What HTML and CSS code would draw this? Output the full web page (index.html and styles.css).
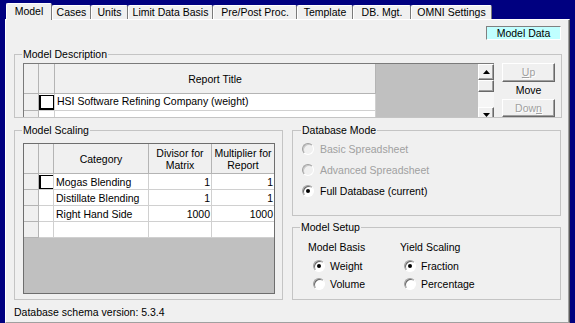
FILE: index.html
```html
<!DOCTYPE html>
<html lang="en">
<head>
    <meta charset="UTF-8">
    <title>Model</title>
    <link rel="stylesheet" href="styles.css">
</head>
<body>
    <div class="window">
        <div class="tabs">
            <div class="tab tab-model active">Model</div>
            <div class="tab tab-cases">Cases</div>
            <div class="tab tab-units">Units</div>
            <div class="tab tab-limit">Limit Data Basis</div>
            <div class="tab tab-prepost">Pre/Post Proc.</div>
            <div class="tab tab-template">Template</div>
            <div class="tab tab-db">DB. Mgt.</div>
            <div class="tab tab-omni">OMNI Settings</div>
        </div>

        <div class="panel">
            <div class="panel-top">
                <div class="model-data">Model Data</div>
            </div>

            <fieldset class="group desc">
                <legend>Model Description</legend>
                <div class="desc-body">
                    <div class="desc-grid">
                        <div class="cells desc-cells">
                            <div class="cell hdr"></div>
                            <div class="cell hdr"></div>
                            <div class="cell hdr title">Report Title</div>
                            <div class="cell rowhdr"></div>
                            <div class="cell"><span class="current"></span></div>
                            <div class="cell text">HSI Software Refining Company (weight)</div>
                            <div class="cell rowhdr"></div>
                            <div class="cell"></div>
                            <div class="cell"></div>
                        </div>
                        <div class="fill"></div>
                        <div class="scrollbar">
                            <div class="sb-btn">
                                <svg width="7" height="4" viewBox="0 0 7 4"><path d="M0 4 L3.5 0 L7 4 Z" fill="#000"/></svg>
                            </div>
                            <div class="sb-thumb"></div>
                            <div class="sb-track"></div>
                            <div class="sb-btn">
                                <svg width="7" height="4" viewBox="0 0 7 4"><path d="M0 0 L7 0 L3.5 4 Z" fill="#000"/></svg>
                            </div>
                        </div>
                    </div>
                    <div class="move">
                        <button disabled><u>U</u>p</button>
                        <span class="move-label">Move</span>
                        <button disabled>Dow<u>n</u></button>
                    </div>
                </div>
            </fieldset>

            <div class="columns">
                <fieldset class="group scaling">
                    <legend>Model Scaling</legend>
                    <div class="scale-grid">
                        <div class="cells scale-cells">
                            <div class="cell hdr"></div>
                            <div class="cell hdr"></div>
                            <div class="cell hdr title">Category</div>
                            <div class="cell hdr title">Divisor for<br>Matrix</div>
                            <div class="cell hdr title last">Multiplier for<br>Report</div>

                            <div class="cell rowhdr"></div>
                            <div class="cell"><span class="current"></span></div>
                            <div class="cell text">Mogas Blending</div>
                            <div class="cell num">1</div>
                            <div class="cell num last">1</div>

                            <div class="cell rowhdr"></div>
                            <div class="cell"></div>
                            <div class="cell text">Distillate Blending</div>
                            <div class="cell num">1</div>
                            <div class="cell num last">1</div>

                            <div class="cell rowhdr"></div>
                            <div class="cell"></div>
                            <div class="cell text">Right Hand Side</div>
                            <div class="cell num">1000</div>
                            <div class="cell num last">1000</div>

                            <div class="cell rowhdr"></div>
                            <div class="cell"></div>
                            <div class="cell"></div>
                            <div class="cell"></div>
                            <div class="cell last"></div>
                        </div>
                    </div>
                </fieldset>

                <div class="right-col">
                    <fieldset class="group mode">
                        <legend>Database Mode</legend>
                        <div class="option disabled"><span class="radio"></span>Basic Spreadsheet</div>
                        <div class="option disabled"><span class="radio"></span>Advanced Spreadsheet</div>
                        <div class="option"><span class="radio on"></span>Full Database (current)</div>
                    </fieldset>

                    <fieldset class="group setup">
                        <legend>Model Setup</legend>
                        <div class="setup-cols">
                            <div class="setup-col basis">
                                <div class="setup-label">Model Basis</div>
                                <div class="option"><span class="radio on"></span>Weight</div>
                                <div class="option"><span class="radio"></span>Volume</div>
                            </div>
                            <div class="setup-col yield">
                                <div class="setup-label">Yield Scaling</div>
                                <div class="option"><span class="radio on"></span>Fraction</div>
                                <div class="option"><span class="radio"></span>Percentage</div>
                            </div>
                        </div>
                    </fieldset>
                </div>
            </div>

            <div class="status">Database schema version: 5.3.4</div>
        </div>
    </div>
</body>
</html>
```

FILE: styles.css
```css
* {
    box-sizing: border-box;
}

body {
    margin: 0;
    height: 323px;
    overflow: hidden;
    background: #000080;
    color: #000;
    font-family: 'Liberation Sans', Arial, sans-serif;
    font-size: 10.5px;
}

.window {
    display: flex;
    flex-direction: column;
    height: 323px;
    padding: 3px 5px 0 5px;
}

/* Tabs */
.tabs {
    display: flex;
    align-items: flex-end;
    height: 16px;
    padding-left: 1px;
}

.tab {
    height: 14px;
    line-height: 13px;
    text-align: center;
    background: #f0f0f0;
    border-top: 1px solid #fff;
    border-left: 1px solid #fff;
    border-right: 1px solid #7a7a7a;
    border-radius: 2px 2px 0 0;
    white-space: nowrap;
}

.tab.active {
    height: 17px;
    line-height: 15px;
    margin-bottom: -1px;
    position: relative;
    z-index: 1;
}

.tab-model { width: 46px; }
.tab-cases { width: 39px; }
.tab-units { width: 37px; }
.tab-limit { width: 85px; }
.tab-prepost { width: 84px; }
.tab-template { width: 56px; }
.tab-db { width: 58px; }
.tab-omni { width: 81px; }

/* Panel */
.panel {
    flex: 1;
    background: #f0f0f0;
    border-top: 1px solid #fff;
    border-left: 1px solid #fff;
    border-right: 1px solid #5a5a5a;
    border-bottom: 1px solid #a0a0a0;
    box-shadow: inset -1px 0 0 #a0a0a0;
    padding: 6px 7px 0 8px;
}

.panel-top {
    display: flex;
    justify-content: flex-end;
    height: 14px;
    padding-right: 1px;
}

.model-data {
    width: 75px;
    height: 14px;
    background: #c0ffff;
    border: 1px solid;
    border-color: #808080 #fff #fff #808080;
    text-align: center;
    line-height: 12px;
}

/* Group boxes */
.group {
    margin: 0;
    min-width: 0;
    border: 1px solid #c4c4c4;
}

.group legend {
    padding: 0 1px;
    margin-left: -1px;
    line-height: 13px;
}

.desc {
    margin-top: 8px;
    padding: 2px 5px 0 8px;
}

.desc-body {
    display: flex;
    height: 54px;
    overflow: hidden;
}

.desc-grid {
    display: flex;
    width: 471px;
    height: 60px;
    border-left: 1px solid #7a7a7a;
    border-top: 1px solid #7a7a7a;
    flex-shrink: 0;
}

.cells {
    display: grid;
    background: #fff;
    align-content: start;
}

.desc-cells {
    width: 352px;
    grid-template-columns: 15px 16px 321px;
    grid-template-rows: 30px 17px 17px;
}

.cell {
    border-right: 1px solid #d0d0d0;
    border-bottom: 1px solid #d0d0d0;
    white-space: nowrap;
    overflow: hidden;
    line-height: 15px;
    position: relative;
}

.cell.hdr,
.cell.rowhdr {
    background: #f0f0f0;
    border-color: #b4b4b4;
}

.cell.title {
    display: flex;
    align-items: center;
    justify-content: center;
    text-align: center;
    line-height: 12px;
}

.cell.text {
    padding-left: 2px;
}

.cell.num {
    text-align: right;
    padding-right: 1px;
}

.cell.last {
    border-right: none;
}

.current {
    position: absolute;
    left: 0;
    top: 1px;
    width: 15px;
    height: 15px;
    border: 1px solid #000;
    border-left-width: 2px;
    border-bottom-width: 2px;
    background: #fff;
}

.fill {
    width: 102px;
    background: #c0c0c0;
}

.scrollbar {
    width: 16px;
    display: flex;
    flex-direction: column;
    background: #f6f6f6;
}

.sb-btn,
.sb-thumb {
    background: #f0f0f0;
    border: 1px solid;
    border-color: #fff #696969 #696969 #fff;
    box-shadow: inset -1px -1px 0 #a0a0a0;
}

.sb-btn {
    height: 16px;
    display: flex;
    align-items: center;
    justify-content: center;
}

.sb-thumb {
    height: 12px;
}

.sb-track {
    height: 16px;
}

.move {
    display: flex;
    flex-direction: column;
    align-items: center;
    width: 53px;
    margin-left: 8px;
}

.move button {
    width: 53px;
    height: 19px;
    padding: 0;
    font: inherit;
    color: #a0a0a0;
    text-shadow: 1px 1px 0 #fff;
    background: #f0f0f0;
    border: 1px solid;
    border-color: #fff #696969 #696969 #fff;
    box-shadow: inset -1px -1px 0 #a0a0a0;
}

.move-label {
    margin: 2px 0;
    line-height: 13px;
}

/* Lower area */
.columns {
    display: flex;
    gap: 9px;
    margin-top: 6px;
}

.scaling {
    width: 269px;
    padding: 6px 0 5px 8px;
}

.scale-grid {
    width: 252px;
    height: 151px;
    background: #c0c0c0;
    border: 1px solid #6e6e6e;
}

.scale-cells {
    grid-template-columns: 15px 15px 95px 63px 62px;
    grid-template-rows: 30px 16px 16px 16px 16px;
}

.scale-cells .cell.num,
.scale-cells .cell.text {
    line-height: 16px;
}

.right-col {
    width: 269px;
    display: flex;
    flex-direction: column;
    gap: 5px;
}

.mode {
    padding: 1px 0 14px 9px;
}

.option {
    display: flex;
    align-items: center;
    gap: 6px;
    height: 21px;
}

.option.disabled {
    color: #a0a0a0;
}

.radio {
    width: 12px;
    height: 12px;
    border-radius: 50%;
    border: 1px solid;
    border-color: #a0a0a0 #fff #fff #a0a0a0;
    box-shadow: inset 1px 1px 0 #696969;
    background: #fff;
    display: flex;
    align-items: center;
    justify-content: center;
}

.radio.on::after {
    content: '';
    width: 4px;
    height: 4px;
    border-radius: 50%;
    background: #000;
}

.option.disabled .radio {
    background: #f0f0f0;
    box-shadow: inset 1px 1px 0 #c8c8c8;
}

.setup {
    padding: 6px 0 6px 8px;
}

.setup-cols {
    display: flex;
    padding-left: 7px;
}

.setup-label {
    line-height: 14px;
    margin-bottom: 3px;
}

.basis {
    width: 92px;
}

.setup .option {
    height: 18px;
    gap: 5px;
    padding-left: 5px;
}

.yield .option {
    padding-left: 4px;
}

.status {
    margin-top: 6px;
    line-height: 13px;
}
```
